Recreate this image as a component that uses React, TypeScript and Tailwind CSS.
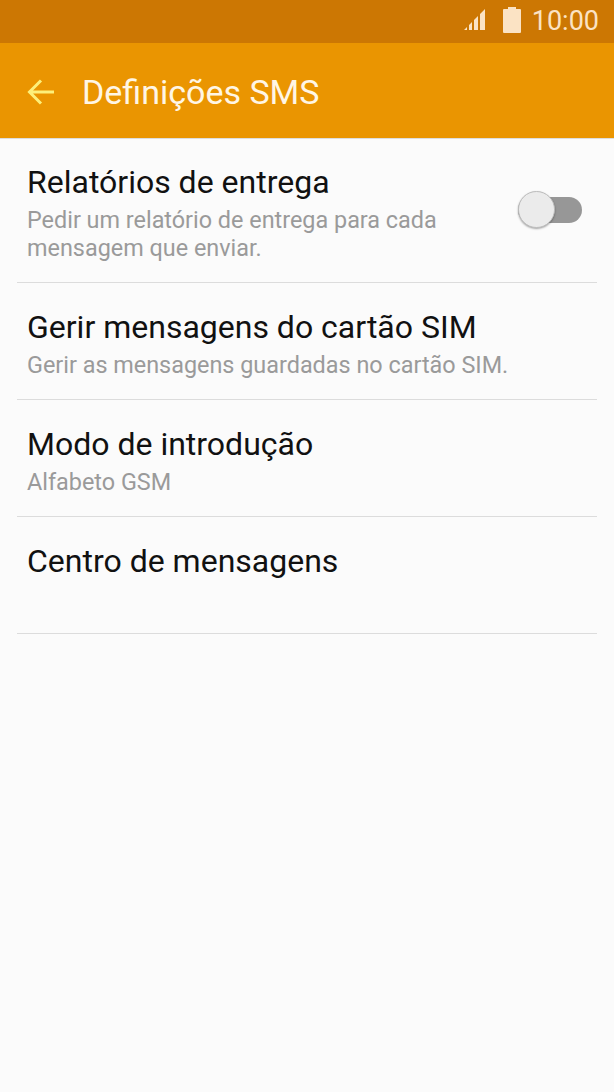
const rows = [
  { title: "Gerir mensagens do cartão SIM", sub: "Gerir as mensagens guardadas no cartão SIM." },
  { title: "Modo de introdução", sub: "Alfabeto GSM" },
  { title: "Centro de mensagens", sub: "" },
]

function Row({ title, sub }: { title: string; sub: string }) {
  return (
    <div className="mx-[17px] h-[117px] border-b border-[#dcdcdc] pl-[10px] pr-[11px] pt-[24px]">
      <div className="text-[32px] leading-[40px] text-[#111111]">{title}</div>
      {sub && <div className="mt-[4px] text-[23.4px] leading-[28px] text-[#9a9a9a]">{sub}</div>}
    </div>
  )
}

export default function App() {
  return (
    <div className="flex h-[1092px] w-[614px] flex-col bg-[#fbfbfb] font-['Roboto',sans-serif]">
      <div className="flex h-[43px] items-center justify-end bg-[#cc7703] pr-[15px] text-[#fbe3c4]">
        <svg width="24" height="24" viewBox="0 0 24 24" className="mb-[2px] mr-[16px]" fill="currentColor">
          <path d="M1 21l3-3v3zM6 16l3-3v8H6zM11 11l4-4v14h-4zM17 5l5-5v21h-5z" />
        </svg>
        <svg width="18" height="26" viewBox="0 0 18 26" className="mb-[3px] mr-[11px]" fill="currentColor">
          <path d="M5 0h8v2h4a1 1 0 0 1 1 1v22a1 1 0 0 1-1 1H1a1 1 0 0 1-1-1V3a1 1 0 0 1 1-1h4z" />
        </svg>
        <span className="text-[27px] leading-none">10:00</span>
      </div>
      <div className="flex h-[96px] items-center border-b border-[#dddddd] bg-[#ea9501] pl-[27px] pt-[3px]">
        <svg width="28" height="28" viewBox="0 0 28 28" fill="none" stroke="#fdf07a" strokeWidth="3" className="mr-[27px]">
          <path d="M27 14H3M14 2.500L2.500 14 14 25.500" />
        </svg>
        <span className="text-[34px] leading-none text-[#fff6e5]">Definições SMS</span>
      </div>
      <div className="relative mx-[17px] h-[144px] border-b border-[#dcdcdc] pl-[10px] pr-[11px] pt-[23px]">
        <div className="text-[32px] leading-[40px] text-[#111111]">Relatórios de entrega</div>
        <div className="mt-[4px] w-[470px] text-[23.4px] leading-[28px] text-[#9a9a9a]">
          Pedir um relatório de entrega para cada
          <br />
          mensagem que enviar.
        </div>
        <div className="absolute left-[501px] top-[58px] h-[26px] w-[64px] rounded-full bg-[#979797]" />
        <div className="absolute left-[501px] top-[52px] h-[37px] w-[37px] rounded-full border border-[#bdbdbd] bg-[#ebebeb] shadow-[0_1px_2px_rgba(0,0,0,0.35)]" />
      </div>
      {rows.map((r) => (
        <Row key={r.title} {...r} />
      ))}
    </div>
  )
}
